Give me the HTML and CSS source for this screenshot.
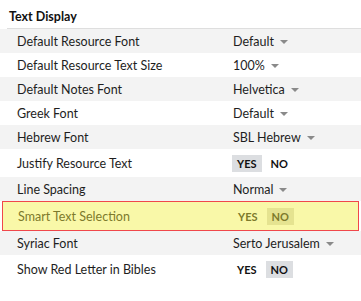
FILE: index.html
```html
<!DOCTYPE html>
<html lang="en">
<head>
  <meta charset="UTF-8">
  <title>Text Display</title>
  <link rel="stylesheet" href="styles.css">
</head>
<body>
  <div class="panel">
    <h2 class="section-title">Text Display</h2>

    <div class="row shaded">
      <div class="label">Default Resource Font</div>
      <div class="value"><span class="select">Default</span></div>
    </div>
    <div class="row">
      <div class="label">Default Resource Text Size</div>
      <div class="value"><span class="select">100%</span></div>
    </div>
    <div class="row shaded">
      <div class="label">Default Notes Font</div>
      <div class="value"><span class="select">Helvetica</span></div>
    </div>
    <div class="row">
      <div class="label">Greek Font</div>
      <div class="value"><span class="select">Default</span></div>
    </div>
    <div class="row shaded">
      <div class="label">Hebrew Font</div>
      <div class="value"><span class="select">SBL Hebrew</span></div>
    </div>
    <div class="row tall">
      <div class="label">Justify Resource Text</div>
      <div class="value toggle">
        <span class="opt on">YES</span>
        <span class="opt">NO</span>
      </div>
    </div>
    <div class="row shaded">
      <div class="label">Line Spacing</div>
      <div class="value"><span class="select">Normal</span></div>
    </div>
    <div class="row tall highlight">
      <div class="label">Smart Text Selection</div>
      <div class="value toggle">
        <span class="opt">YES</span>
        <span class="opt on">NO</span>
      </div>
    </div>
    <div class="row shaded">
      <div class="label">Syriac Font</div>
      <div class="value"><span class="select">Serto Jerusalem</span></div>
    </div>
    <div class="row tall">
      <div class="label">Show Red Letter in Bibles</div>
      <div class="value toggle">
        <span class="opt">YES</span>
        <span class="opt on">NO</span>
      </div>
    </div>
  </div>
</body>
</html>
```

FILE: styles.css
```css
body {
  margin: 0;
  background-color: white;
  font-family: Lato, "Liberation Sans", sans-serif;
  font-size: 12.5px;
  color: #1e1e1e;
}

.panel {
  padding-top: 0;
}

.section-title {
  margin: 0 0 0 7px;
  padding: 9px 0 0 2px;
  height: 19px;
  border-bottom: 1px solid #dedede;
  font-size: 12.5px;
  font-weight: bold;
  color: #111;
}

.row {
  display: grid;
  grid-template-columns: 233px 1fr;
  align-items: center;
  height: 24px;
}

.row.tall {
  height: 28px;
}

.shaded {
  background-color: #f3f3f3;
}

.label {
  padding-left: 17px;
}

.select::after {
  content: "";
  display: inline-block;
  margin-left: 6px;
  vertical-align: middle;
  border-left: 4px solid transparent;
  border-right: 4px solid transparent;
  border-top: 4px solid #8a8a8a;
}

.toggle {
  display: flex;
  gap: 4px;
  margin-left: -1px;
}

.opt {
  padding: 2px 5px;
  font-size: 11px;
  font-weight: bold;
  color: #111;
  line-height: 13px;
}

.opt.on {
  background-color: #dcdee1;
}

.highlight {
  margin: 0 2px;
  height: 27px;
  border: 1px solid #f0474b;
  background-color: #f9f8a8;
  grid-template-columns: 231px 1fr;
}

.highlight .label {
  padding-left: 15px;
  color: #7d7a2c;
}

.highlight .opt {
  color: #7d7a2c;
}

.highlight .opt.on {
  background-color: #e5e390;
}
```
